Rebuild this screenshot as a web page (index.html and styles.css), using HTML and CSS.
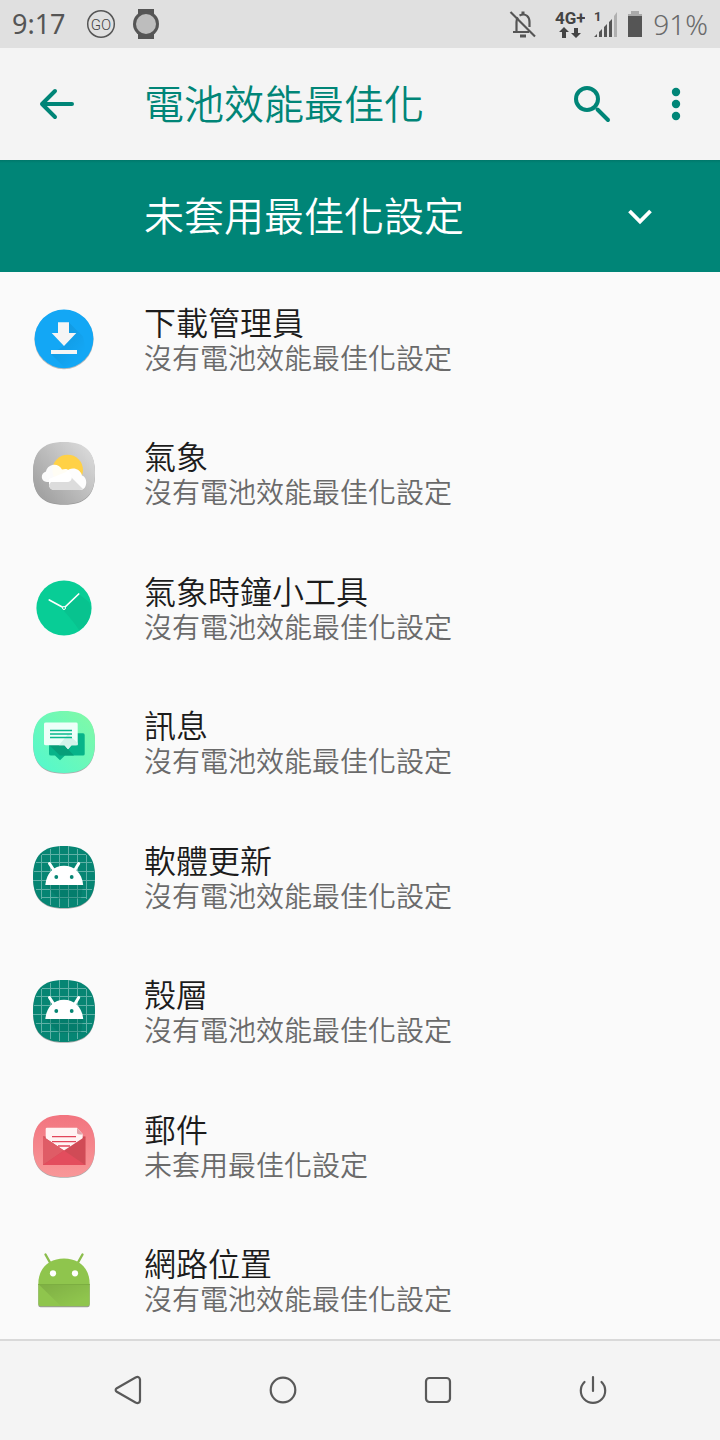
FILE: index.html
```html
<!DOCTYPE html>
<html lang="zh-Hant">

<head>
    <meta charset="UTF-8">
    <meta name="viewport" content="width=device-width, initial-scale=1.0">
    <title>電池效能最佳化</title>
    <link rel="stylesheet" href="styles.css">
</head>

<body>
    <!-- shared shapes -->
    <svg class="defs" width="0" height="0">
        <defs>
            <linearGradient id="weather" x1="1" y1="0" x2="0.1" y2="0.8">
                <stop offset="0" stop-color="#e0e0e0"/><stop offset="1" stop-color="#a3a3a3"/>
            </linearGradient>
            <linearGradient id="mint" x1="1" y1="0" x2="0" y2="1">
                <stop offset="0" stop-color="#83f9a5"/><stop offset="1" stop-color="#51f8cf"/>
            </linearGradient>
            <linearGradient id="rose" x1="0.5" y1="0" x2="0.5" y2="1">
                <stop offset="0" stop-color="#f2747f"/><stop offset="1" stop-color="#f89798"/>
            </linearGradient>
            <linearGradient id="fade" x1="0" y1="0" x2="1" y2="1">
                <stop offset="0" stop-color="#000" stop-opacity="0.12"/><stop offset="0.8" stop-color="#000" stop-opacity="0"/>
            </linearGradient>
            <symbol id="squircle" viewBox="0 0 64 64">
                <path d="M32 1C53.500 1 63 10.500 63 32S53.500 63 32 63 1 53.500 1 32 10.500 1 32 1Z"/>
            </symbol>
            <symbol id="droid" viewBox="0 0 64 64">
                <use href="#squircle" fill="#068573"/>
                <path d="M9.500 10v44M18.500 4v56M27.500 1v61M36.500 1v61M45.500 4v56M54.500 10v44M10 9.500h44M4 17.500h56M2 26.500h60M1 35.500h62M4 44.500h56M9 52.500h46" stroke="#5fb1a6"/>
                <path d="M13.500 40L27 54H49L51 40Z" fill="#04705f" opacity="0.35"/>
                <path d="M13.300 40C14.500 27.500 22 20.700 32 20.700S50 27.500 51.200 40Z" fill="#fff"/>
                <path d="M17.500 18.500L22 25.500M46.700 18.500L42.500 25.500" stroke="#fff" stroke-width="3" stroke-linecap="round"/>
                <circle cx="24.300" cy="32" r="1.900" fill="#068573"/>
                <circle cx="39.700" cy="32" r="1.900" fill="#068573"/>
            </symbol>
        </defs>
    </svg>

    <div class="status-bar">
        <div class="status-left">
            <span class="time">9:17</span>
            <svg class="icon-go" width="30" height="30" viewBox="0 0 30 30">
                <circle cx="15" cy="15" r="13.300" fill="none" stroke="#555" stroke-width="1.500"/>
                <text x="15" y="20.500" text-anchor="middle">GO</text>
            </svg>
            <svg width="28" height="32" viewBox="0 0 28 32">
                <path d="M6 1H22V6H6ZM6 26H22V31H6Z" fill="#555"/>
                <circle cx="14" cy="16" r="13" fill="#555"/>
                <circle cx="14" cy="16" r="10" fill="#bdbdbd"/>
            </svg>
        </div>
        <div class="status-right">
            <svg width="28" height="28" viewBox="0 0 28 28" fill="none" stroke="#555" stroke-width="2.200">
                <path d="M4 22H20M7.500 22V12C7.500 10 8 8.500 9 7.500M10.500 5.500C17 2.500 20.500 7 20.500 12V17"/>
                <path d="M14 1.500V5M11 26H17" stroke-width="3"/>
                <path d="M1.500 2L26 26.500"/>
            </svg>
            <svg class="icon-net" width="30" height="30" viewBox="0 0 30 30">
                <text x="0" y="15">4G+</text>
                <path d="M9 18L14 23H11V29H7V23H4ZM21 29L16 24H19V19H23V24H26Z" fill="#444"/>
            </svg>
            <svg class="icon-signal" width="26" height="30" viewBox="0 0 26 30">
                <text x="1" y="12">1</text>
                <path d="M1 28L4 25V28ZM6 28V23L9 20V28ZM11 28V18L14 15V28ZM16 28V13L19 10V28Z" fill="#555"/>
                <path d="M21 28V7L24 3V28Z" fill="#b0b0b0"/>
            </svg>
            <svg class="icon-battery" width="16" height="28" viewBox="0 0 16 28">
                <path d="M4 1H12V4H15V7H1V4H4Z" fill="#aaa"/>
                <path d="M1 6H15V27H1Z" fill="#555"/>
            </svg>
            <span class="battery">91%</span>
        </div>
    </div>

    <header class="app-bar">
        <button class="icon-button" type="button" aria-label="返回">
            <svg width="40" height="40" viewBox="0 0 40 40" fill="none" stroke="#008577" stroke-width="4" stroke-linecap="round" stroke-linejoin="round">
                <path d="M36 20H6M19 7L6 20L19 33"/>
            </svg>
        </button>
        <h1>電池效能最佳化</h1>
        <button class="icon-button" type="button" aria-label="搜尋">
            <svg width="40" height="40" viewBox="0 0 40 40" fill="none" stroke="#008577" stroke-width="4" stroke-linecap="round">
                <circle cx="15" cy="15" r="11"/>
                <path d="M25.500 25.500L36 36"/>
            </svg>
        </button>
        <button class="icon-button" type="button" aria-label="更多選項">
            <svg width="40" height="40" viewBox="0 0 40 40" fill="#008577">
                <circle cx="20" cy="8" r="4.200"/><circle cx="20" cy="20" r="4.200"/><circle cx="20" cy="32" r="4.200"/>
            </svg>
        </button>
    </header>

    <div class="filter">
        <select aria-label="未套用最佳化設定">
            <option selected>未套用最佳化設定</option>
        </select>
        <svg class="chevron" width="24" height="16" viewBox="0 0 24 16" fill="none" stroke="#fff" stroke-width="3.800">
            <path d="M1.500 2L12 12.500L22.500 2"/>
        </svg>
    </div>

    <ul class="app-list">
        <li class="app">
            <svg class="app-icon" viewBox="0 0 64 64">
                <circle cx="32" cy="32.600" r="29.600" fill="#bbb"/>
                <circle cx="32" cy="31.800" r="29.400" fill="#13a7f5"/>
                <path d="M37 15.500L51 29.500 54 43 44 55 32 60 19 47 32 39Z" fill="url(#fade)"/>
                <path d="M26 15.300H37V26H44.300L32 39 19.700 26H26ZM19 43H45V47H19Z" fill="#f5f5f5"/>
            </svg>
            <div class="app-text">
                <h2>下載管理員</h2>
                <p>沒有電池效能最佳化設定</p>
            </div>
        </li>
        <li class="app">
            <svg class="app-icon" viewBox="0 0 64 64">
                <use href="#squircle" y="0.800" fill="#999"/>
                <use href="#squircle" fill="url(#weather)"/>
                <circle cx="35.700" cy="29" r="15.300" fill="#ffd146"/>
                <path d="M22 49A5 5 0 0 1 17 44V38L34 31C38 25.500 48 26.500 50 34.500C56 36 56 49 48 49Z" fill="#fdfdfd"/>
                <path d="M39 36L51 48 48 49H22Q18 49 17 44L19 41H35Q41 40 39 36Z" fill="#dcdcdc"/>
                <path d="M15 41C8.500 41 8 32 14 30.500C16 22 27 22 30 28.500C36 26.500 38 30 37.500 32C41.500 34 40 41 35 41Z" fill="#fff" opacity="0.940"/>
            </svg>
            <div class="app-text">
                <h2>氣象</h2>
                <p>沒有電池效能最佳化設定</p>
            </div>
        </li>
        <li class="app">
            <svg class="app-icon" viewBox="0 0 64 64">
                <circle cx="32" cy="32" r="27.600" fill="#08cd96"/>
                <path d="M32 32L46.700 18 57 26C62 38 55 50 47 54Q42 46 32 35Z" fill="#08c38f"/>
                <path d="M17.300 24L32 32L46.700 18" fill="none" stroke="#fff" stroke-width="1.700" stroke-linecap="round"/>
                <circle cx="32" cy="32" r="1.500" fill="#08cd96" stroke="#fff"/>
            </svg>
            <div class="app-text">
                <h2>氣象時鐘小工具</h2>
                <p>沒有電池效能最佳化設定</p>
            </div>
        </li>
        <li class="app">
            <svg class="app-icon" viewBox="0 0 64 64">
                <use href="#squircle" y="0.800" fill="#aaa"/>
                <use href="#squircle" fill="url(#mint)"/>
                <path d="M19 23.300H51Q52.700 23.300 52.700 25V44Q52.700 45.600 51 45.600H33L28 50.300 23 45.600H19Q17 45.600 17 44V25Z" fill="#07b489"/>
                <path d="M17 35L28 45.600H42L36 39.300 32.700 35Z" fill="#079f79"/>
                <path d="M14 12.600H44Q45.700 12.600 45.700 14V34Q45.700 35.200 44 35.200H39.500L36 39.300 32.500 35.200H14Q12 35.200 12 34V14Q12 12.600 14 12.600Z" fill="#edfff9"/>
                <path d="M36 24L45.700 33V35.200H39.500L36 39.300 32.500 35.200H27Z" fill="#d3f3ea"/>
                <path d="M18 20.500H40M18 24H40M18 27.500H40" stroke="#07b98c" stroke-width="1.300"/>
            </svg>
            <div class="app-text">
                <h2>訊息</h2>
                <p>沒有電池效能最佳化設定</p>
            </div>
        </li>
        <li class="app">
            <svg class="app-icon" viewBox="0 0 64 64"><use href="#squircle" y="0.800" fill="#aaa"/><use href="#droid"/></svg>
            <div class="app-text">
                <h2>軟體更新</h2>
                <p>沒有電池效能最佳化設定</p>
            </div>
        </li>
        <li class="app">
            <svg class="app-icon" viewBox="0 0 64 64"><use href="#squircle" y="0.800" fill="#aaa"/><use href="#droid"/></svg>
            <div class="app-text">
                <h2>殼層</h2>
                <p>沒有電池效能最佳化設定</p>
            </div>
        </li>
        <li class="app">
            <svg class="app-icon" viewBox="0 0 64 64">
                <use href="#squircle" y="0.800" fill="#aaa"/>
                <use href="#squircle" fill="url(#rose)"/>
                <path d="M11 22.400H53.300V51H11Z" fill="#c8444f"/>
                <path d="M15 13.700H45L50.700 20V38H13.700V15Q13.700 13.700 15 13.700Z" fill="#fff3f3"/>
                <path d="M45 13.700V19Q45 20.500 50.700 20.500Z" fill="#e0a2a8"/>
                <path d="M20 22.700H44M20 27.700H44M26 32H38" stroke="#e2455a" stroke-width="1.300"/>
                <path d="M11 22.400L32 36.400 53.300 22.400V51H11Z" fill="#d04b56"/>
                <path d="M11 22.400L32 36.400 11 51Z" fill="#df5c66"/>
                <path d="M11 51L32 36.400 53.300 51Z" fill="#e34d5d"/>
            </svg>
            <div class="app-text">
                <h2>郵件</h2>
                <p>未套用最佳化設定</p>
            </div>
        </li>
        <li class="app">
            <svg class="app-icon" viewBox="0 0 64 64">
                <path d="M6.300 36V57Q6.300 59.200 8.500 59.200H55.500Q57.700 59.200 57.700 57V36Z" fill="#9a9a9a"/>
                <path d="M13.500 6.500L18 14.500M50.500 6.500L46 14.500" stroke="#8bbd4c" stroke-width="2.400" stroke-linecap="round"/>
                <path d="M6.300 36C6.300 20 17 10.500 32 10.500S57.700 20 57.700 36V56Q57.700 58.300 55.500 58.300H8.500Q6.300 58.300 6.300 56Z" fill="#8fc54d"/>
                <path d="M6.300 36H57.700V56Q57.700 58.300 55.500 58.300H29Z" fill="url(#fade)"/>
                <path d="M6.300 36.500H57.700" stroke="#7cae41"/>
                <circle cx="21" cy="25.300" r="3.100" fill="#fff"/><circle cx="43" cy="25.300" r="3.100" fill="#fff"/>
            </svg>
            <div class="app-text">
                <h2>網路位置</h2>
                <p>沒有電池效能最佳化設定</p>
            </div>
        </li>
    </ul>

    <nav class="nav-bar">
        <button type="button" aria-label="返回">
            <svg width="32" height="32" viewBox="0 0 32 32">
                <path d="M4.800 14.200L23.500 3.500Q27.500 1.800 28 5.500V26.500Q27.500 30.200 23.500 28.500L4.800 17.800Q2.500 16 4.800 14.200Z"/>
            </svg>
        </button>
        <button type="button" aria-label="主畫面">
            <svg width="32" height="32" viewBox="0 0 32 32"><circle cx="16" cy="16" r="12.300"/></svg>
        </button>
        <button type="button" aria-label="最近">
            <svg width="32" height="32" viewBox="0 0 32 32"><rect x="4" y="4" width="24" height="24" rx="3.500"/></svg>
        </button>
        <button type="button" aria-label="電源">
            <svg width="32" height="32" viewBox="0 0 32 32"><path d="M16 3V17M7.500 8A12.200 12.200 0 1 0 24.500 8"/></svg>
        </button>
    </nav>
</body>

</html>
```

FILE: styles.css
```css
* {
    box-sizing: border-box;
}

body {
    display: flex;
    flex-direction: column;
    min-height: 100vh;
    margin: 0;
    font-family: "Noto Sans CJK TC", "Noto Sans", sans-serif;
    font-weight: 350;
    background: #fafafa;
    color: #1c1c1c;
}

.defs {
    position: absolute;
}

svg {
    display: block;
}

button {
    padding: 0;
    border: none;
    background: none;
    cursor: pointer;
}

/* status bar */
.status-bar {
    display: flex;
    justify-content: space-between;
    height: 48px;
    padding: 0 12px;
    background: #e0e0e0;
    font-family: "Noto Sans", sans-serif;
    font-size: 28px;
    line-height: 48px;
}

.status-left,
.status-right {
    display: flex;
    align-items: center;
}

.status-left {
    gap: 16px;
}

.status-left .time {
    margin-right: 4px;
    color: #555;
    font-weight: 400;
    font-size: 27px;
}

.status-right {
    gap: 8px;
}

.status-right .icon-net {
    margin-left: 10px;
}

.icon-battery {
    margin-right: 2px;
}

.icon-net text,
.icon-signal text {
    font-family: Roboto, sans-serif;
    font-size: 17px;
    font-weight: 700;
    fill: #444;
}

.icon-signal text {
    font-size: 13px;
}

.icon-go text {
    font-family: Roboto, sans-serif;
    font-size: 15px;
    font-weight: 300;
    fill: #444;
}

.battery {
    color: #6a6a6a;
    font-weight: 300;
}

/* app bar */
.app-bar {
    display: flex;
    align-items: center;
    height: 112px;
    padding: 0 24px 0 36px;
    background: #f4f4f4;
}

.app-bar h1 {
    flex: 1;
    margin: 0 0 0 68px;
    padding-bottom: 4px;
    color: #008577;
    font-size: 40px;
    font-weight: 350;
    line-height: 56px;
}

.icon-button + .icon-button {
    margin-left: 44px;
}

/* filter drop-down */
.filter {
    position: relative;
    background: #008577;
}

.filter select {
    display: block;
    width: 100%;
    height: 112px;
    padding: 0 80px 4px 144px;
    border: none;
    appearance: none;
    background: linear-gradient(#00776a, #008577 3px);
    color: white;
    font-family: inherit;
    font-size: 40px;
    font-weight: 350;
}

.chevron {
    position: absolute;
    top: 50%;
    right: 68px;
    margin-top: -7px;
    pointer-events: none;
}

/* app list */
.app-list {
    display: flex;
    flex: 1;
    flex-direction: column;
    justify-content: space-between;
    margin: 0;
    padding: 27px 32px 19px;
    list-style: none;
}

.app {
    display: flex;
    align-items: center;
    gap: 48px;
    height: 80px;
}

.app-icon {
    width: 64px;
    height: 64px;
}

.app-text h2,
.app-text p {
    margin: 0;
    font-weight: 350;
    line-height: 36px;
}

.app-text h2 {
    font-size: 32px;
}

.app-text p {
    color: #6a6a6a;
    font-size: 28px;
}

/* navigation bar */
.nav-bar {
    display: grid;
    grid-template-columns: repeat(4, 1fr);
    height: 101px;
    padding: 0 50px 2px;
    border-top: 2px solid #d9d9d9;
    background: #f4f4f4;
}

.nav-bar button {
    display: flex;
    align-items: center;
    justify-content: center;
}

.nav-bar svg {
    fill: none;
    stroke: #595959;
    stroke-width: 2.2;
    stroke-linecap: round;
}
```
